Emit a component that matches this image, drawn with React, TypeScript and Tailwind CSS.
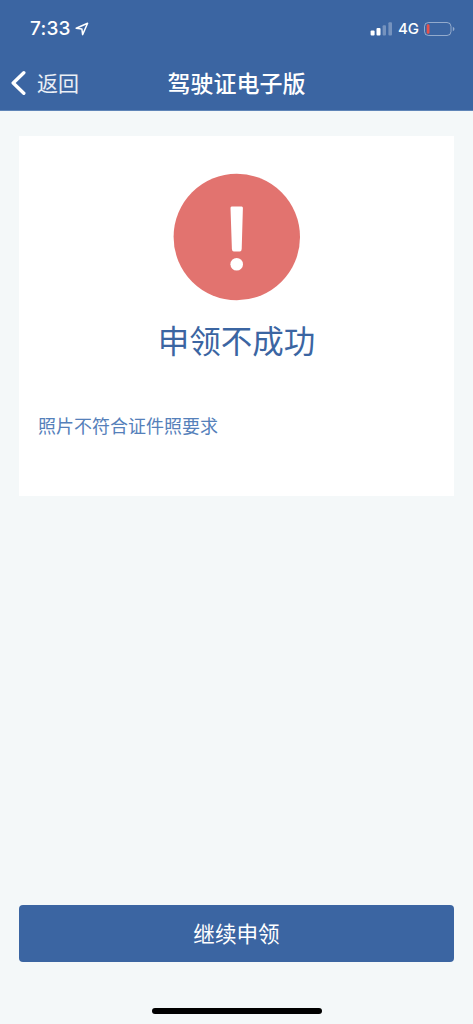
const reasons = ["照片不符合证件照要求"];

function StatusBar() {
  return (
    <div className="flex h-[57px] items-center justify-between pl-[30px] pr-[18px] text-white">
      <div className="flex items-center gap-[4px]">
        <span className="w-[41px] whitespace-nowrap pt-px font-['Inter',sans-serif] text-[19px] font-medium leading-[24px] tracking-[0.2px]">
          7:33
        </span>
        <svg width="14" height="14" viewBox="0 0 14 14" fill="none">
          <path
            d="M1.2 6.3 12.6 1.2 7.6 12.6 6.9 7 Z"
            stroke="white"
            strokeWidth="1.5"
            strokeLinejoin="round"
          />
        </svg>
      </div>

      <div className="flex items-center">
        <svg width="22" height="14" viewBox="0 0 22 14" fill="white">
          <rect x="0.6" y="8.6" width="4" height="4.8" rx="1" />
          <rect x="6.5" y="6" width="4" height="7.4" rx="1" />
          <rect x="12.6" y="3.2" width="3.4" height="10.2" rx="1" opacity="0.3" />
          <rect x="18.4" y="0.2" width="3.6" height="13.2" rx="1" opacity="0.3" />
        </svg>
        <span className="ml-[6px] w-[21px] whitespace-nowrap pt-px font-['Inter',sans-serif] text-[15px] font-medium leading-[24px]">
          4G
        </span>
        <svg className="ml-[5px]" width="31" height="14" viewBox="0 0 31 14">
          <rect
            x="0.5"
            y="0.5"
            width="26.5"
            height="13"
            rx="4"
            fill="none"
            stroke="white"
            strokeOpacity="0.45"
          />
          <rect x="2.7" y="2.2" width="2.8" height="9.6" rx="1.3" fill="#e8514a" />
          <path d="M28.8 4.7 Q30.5 5.5 30.5 7 Q30.5 8.5 28.8 9.3 Z" fill="white" opacity="0.45" />
        </svg>
      </div>
    </div>
  );
}

function NavBar() {
  return (
    <div className="grid h-[52px] grid-cols-[1fr_auto_1fr] items-center text-white">
      <button className="flex items-center pl-[10px]">
        <svg width="16" height="26" viewBox="0 0 16 26" fill="none">
          <path
            d="M13.8 2.8 3.2 13 13.8 23.2"
            stroke="white"
            strokeWidth="3.4"
            strokeLinecap="round"
            strokeLinejoin="round"
          />
        </svg>
        <span className="ml-[11px] pb-[3px] text-[21px] leading-[30px] text-white/90">返回</span>
      </button>
      <h1 className="pb-[3px] text-[23px] font-medium leading-[30px]">驾驶证电子版</h1>
      <span />
    </div>
  );
}

function ErrorMark() {
  return (
    <svg width="128" height="128" viewBox="0 0 128 128">
      <circle cx="63.8" cy="64" r="63.2" fill="#e2736f" />
      <path
        d="M58.7 33.5 H68.7 Q70 33.5 69.9 35 L68.7 76 Q68.5 78.5 66.8 78.5 H60.8 Q59.1 78.5 58.9 76 L57.5 35 Q57.4 33.5 58.7 33.5 Z"
        fill="white"
      />
      <circle cx="63.7" cy="91.3" r="6.3" fill="white" />
    </svg>
  );
}

export default function App() {
  return (
    <div className="flex h-screen flex-col bg-[#f4f8f9] font-['Noto_Sans_CJK_SC',sans-serif]">
      <header className="h-[111px] shrink-0 border-b border-[#5f85b8] bg-[#3b65a2]">
        <StatusBar />
        <NavBar />
      </header>

      <main className="flex flex-1 flex-col px-[19px] pt-[25px]">
        {/* Result card */}
        <section className="flex h-[360px] flex-col items-center bg-white pt-[37px]">
          <ErrorMark />
          <h2 className="mt-[14px] text-[31.5px] leading-[48px] text-[#3b65a2]">申领不成功</h2>
          <ul className="mt-[49px] w-full px-[19px]">
            {reasons.map((reason) => (
              <li key={reason} className="text-[18px] leading-[26px] text-[#5580ba]">
                {reason}
              </li>
            ))}
          </ul>
        </section>

        <button className="mt-auto h-[57px] rounded-[4px] bg-[#3b65a2] pb-[2px] text-[21.6px] leading-[32px] text-white">
          继续申领
        </button>
      </main>

      {/* Home indicator */}
      <div className="flex h-[62px] shrink-0 items-end justify-center pb-[10px]">
        <div className="h-[6px] w-[170px] rounded-full bg-black" />
      </div>
    </div>
  );
}
